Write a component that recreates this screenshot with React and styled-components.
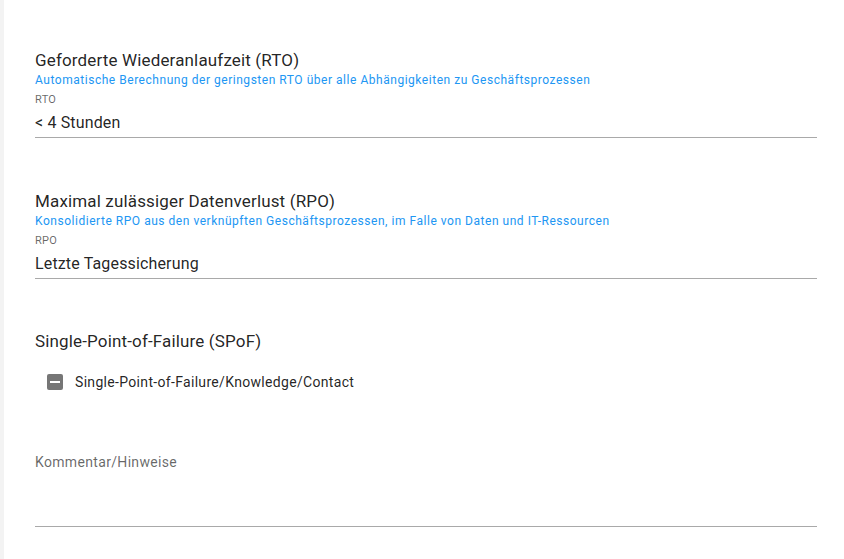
import React from 'react';
import styled, { createGlobalStyle } from 'styled-components';

const GlobalStyle = createGlobalStyle`
  html, body {
    margin: 0;
    padding: 0;
    background: #ffffff;
    font-family: Roboto, "Liberation Sans", Arial, sans-serif;
    -webkit-font-smoothing: antialiased;
  }
`;

const Shell = styled.div`
  display: flex;
  min-height: 559px;
`;

const Rail = styled.div`
  width: 4px;
  flex-shrink: 0;
  background: #f3f3f3;
`;

const Form = styled.div`
  flex: 1;
  padding: 48px 27px 0 31px;
  display: flex;
  flex-direction: column;
`;

const Section = styled.section`
  display: flex;
  flex-direction: column;
  margin-bottom: ${p => p.$gap || 0}px;
`;

const Heading = styled.h3`
  margin: 0;
  font-size: 17px;
  font-weight: 400;
  line-height: 24px;
  letter-spacing: 0.15px;
  color: rgba(0, 0, 0, 0.87);
`;

const Hint = styled.div`
  font-size: 12px;
  line-height: 16px;
  letter-spacing: 0.53px;
  color: #2196f3;
`;

const FieldLabel = styled.div`
  margin-top: 4px;
  font-size: 11px;
  line-height: 16px;
  letter-spacing: 0.3px;
  color: rgba(0, 0, 0, 0.6);
`;

const Value = styled.div`
  font-size: 16px;
  line-height: 22px;
  letter-spacing: 0.15px;
  padding: 4px 0 3px;
  color: rgba(0, 0, 0, 0.87);
  border-bottom: 1px solid #a9a9a9;
`;

const CheckRow = styled.label`
  display: flex;
  align-items: center;
  gap: 12px;
  margin: 21px 0 0 12px;
  font-size: 14px;
  letter-spacing: 0.32px;
  color: rgba(0, 0, 0, 0.87);
`;

const Box = styled.span`
  width: 16px;
  height: 16px;
  border-radius: 2px;
  background: #767676;
  display: flex;
  align-items: center;
  justify-content: center;

  &::after {
    content: '';
    width: 10px;
    height: 2px;
    background: #ffffff;
  }
`;

const CommentLabel = styled.div`
  font-size: 14px;
  line-height: 20px;
  letter-spacing: 0.33px;
  color: rgba(0, 0, 0, 0.6);
`;

const CommentArea = styled.div`
  height: 54px;
  border-bottom: 1px solid #a9a9a9;
`;

export default function App() {
  return (
    <>
      <GlobalStyle />
      <Shell>
        <Rail />
        <Form>
          <Section $gap={51}>
            <Heading>Geforderte Wiederanlaufzeit (RTO)</Heading>
            <Hint>Automatische Berechnung der geringsten RTO über alle Abhängigkeiten zu Geschäftsprozessen</Hint>
            <FieldLabel>RTO</FieldLabel>
            <Value>&lt; 4 Stunden</Value>
          </Section>

          <Section $gap={50}>
            <Heading>Maximal zulässiger Datenverlust (RPO)</Heading>
            <Hint>Konsolidierte RPO aus den verknüpften Geschäftsprozessen, im Falle von Daten und IT-Ressourcen</Hint>
            <FieldLabel>RPO</FieldLabel>
            <Value>Letzte Tagessicherung</Value>
          </Section>

          <Section $gap={62}>
            <Heading>Single-Point-of-Failure (SPoF)</Heading>
            <CheckRow>
              <Box />
              Single-Point-of-Failure/Knowledge/Contact
            </CheckRow>
          </Section>

          <Section>
            <CommentLabel>Kommentar/Hinweise</CommentLabel>
            <CommentArea />
          </Section>
        </Form>
      </Shell>
    </>
  );
}
